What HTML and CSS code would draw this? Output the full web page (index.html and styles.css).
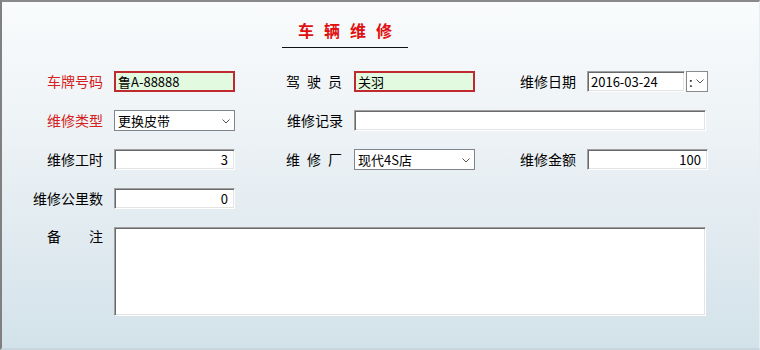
FILE: index.html
```html
<!DOCTYPE html>
<html lang="zh-CN">
<head>
    <meta charset="UTF-8">
    <title>车辆维修</title>
    <link rel="stylesheet" href="styles.css">
</head>
<body>
    <div class="window">
        <div class="form-title">
            <h1>车辆维修</h1>
        </div>

        <div class="form-grid">
            <!-- row 1 -->
            <label class="lbl required">车牌号码</label>
            <div class="field hl">鲁A-88888</div>
            <label class="lbl spaced">驾驶员</label>
            <div class="field hl">关羽</div>
            <label class="lbl">维修日期</label>
            <div class="date-wrap">
                <div class="field">2016-03-24</div>
                <div class="date-btn">
                    <span>:</span>
                    <svg width="8" height="5" viewBox="0 0 8 5"><polyline points="0.5,0.5 4,4 7.5,0.5" fill="none" stroke="#555" stroke-width="1"/></svg>
                </div>
            </div>

            <!-- row 2 -->
            <label class="lbl required">维修类型</label>
            <div class="combo">
                <span>更换皮带</span>
                <svg width="8" height="5" viewBox="0 0 8 5"><polyline points="0.5,0.5 4,4 7.5,0.5" fill="none" stroke="#555" stroke-width="1"/></svg>
            </div>
            <label class="lbl">维修记录</label>
            <div class="field wide"></div>

            <!-- row 3 -->
            <label class="lbl">维修工时</label>
            <div class="field num">3</div>
            <label class="lbl spaced">维修厂</label>
            <div class="combo">
                <span>现代4S店</span>
                <svg width="8" height="5" viewBox="0 0 8 5"><polyline points="0.5,0.5 4,4 7.5,0.5" fill="none" stroke="#555" stroke-width="1"/></svg>
            </div>
            <label class="lbl">维修金额</label>
            <div class="field num">100</div>

            <!-- row 4 -->
            <label class="lbl">维修公里数</label>
            <div class="field num">0</div>

            <!-- row 5 -->
            <label class="lbl memo-lbl"><span>备</span><span>注</span></label>
            <div class="field memo"></div>
        </div>
    </div>
</body>
</html>
```

FILE: styles.css
```css
html, body {
    margin: 0;
    padding: 0;
}

body {
    font-family: "Noto Sans CJK SC", "Liberation Sans", sans-serif;
    font-size: 14px;
    color: #000;
}

.window {
    width: 760px;
    height: 350px;
    box-sizing: border-box;
    border-left: 2px solid #808080;
    border-top: 2px solid #8a8a8a;
    border-right: 1px solid #e6eef2;
    border-bottom: 2px solid #c9d6dd;
    background: linear-gradient(to bottom, #f9fbfc 0%, #eef3f6 35%, #d3e2ea 100%);
    overflow: hidden;
}

.form-title {
    display: flex;
    padding-top: 17px;
    padding-left: 280px;
}

.form-title h1 {
    margin: 0;
    width: 126px;
    padding-bottom: 6px;
    border-bottom: 1px solid #111;
    text-align: center;
    font-size: 16px;
    font-weight: bold;
    line-height: 22px;
    letter-spacing: 10px;
    text-indent: 10px;
    color: #e01010;
}

.form-grid {
    display: grid;
    grid-template-columns: 112px 121px 119px 121px 112px 121px;
    grid-auto-rows: 21px;
    row-gap: 18px;
    margin-top: 23px;
}

.lbl {
    grid-column: auto;
    text-align: right;
    padding-right: 11px;
    line-height: 21px;
    white-space: nowrap;
}

.lbl.required {
    color: #d42020;
}

.lbl.spaced {
    letter-spacing: 7px;
    padding-right: 5px;
}

.field {
    box-sizing: border-box;
    height: 21px;
    background: #fff;
    border: 1px solid;
    border-color: #a0a0a0 #fff #fff #a0a0a0;
    box-shadow: inset 1px 1px 0 #696969, inset -1px -1px 0 #e3e3e3;
    padding: 0 4px;
    font-size: 13px;
    line-height: 19px;
    white-space: nowrap;
    overflow: hidden;
}

.field.hl {
    background: #e2fadf;
    border: 2px solid #bf2a2f;
    box-shadow: none;
    padding: 0 2px;
    line-height: 17px;
}

.field.num {
    text-align: right;
    padding-right: 6px;
}

.field.wide {
    grid-column: 4 / span 3;
    margin-right: 2px;
}

.date-wrap {
    display: flex;
    gap: 1px;
}

.date-wrap .field {
    width: 98px;
    padding-left: 3px;
}

.date-btn {
    box-sizing: border-box;
    width: 22px;
    height: 21px;
    background: #fff;
    border: 1px solid #8a8a8a;
    display: flex;
    align-items: center;
    padding-left: 2px;
    gap: 3px;
    font-size: 13px;
}

.combo {
    box-sizing: border-box;
    height: 21px;
    background: #fff;
    border: 1px solid #7f858d;
    display: flex;
    align-items: center;
    justify-content: space-between;
    padding: 0 4px 0 3px;
    font-size: 13px;
}

.combo svg {
    margin-top: 2px;
}

.memo-lbl {
    grid-column: 1;
    display: flex;
    justify-content: space-between;
    padding-left: 45px;
    align-self: start;
    line-height: 19px;
}

.field.memo {
    grid-column: 2 / span 5;
    height: 89px;
    margin-right: 2px;
}
```
